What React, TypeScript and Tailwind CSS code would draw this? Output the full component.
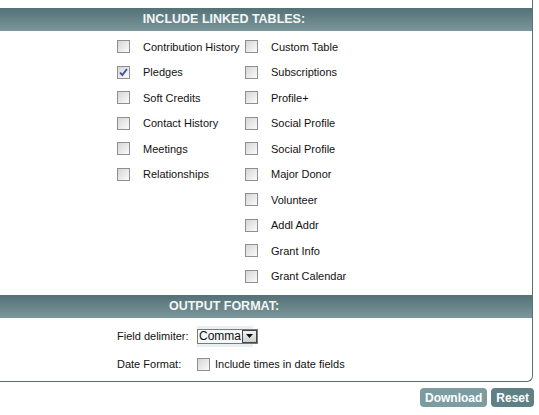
import React from 'react';

const leftCol = [
  { name: 'Contribution History', checked: false },
  { name: 'Pledges', checked: true },
  { name: 'Soft Credits', checked: false },
  { name: 'Contact History', checked: false },
  { name: 'Meetings', checked: false },
  { name: 'Relationships', checked: false },
];

const rightCol = [
  'Custom Table',
  'Subscriptions',
  'Profile+',
  'Social Profile',
  'Social Profile',
  'Major Donor',
  'Volunteer',
  'Addl Addr',
  'Grant Info',
  'Grant Calendar',
];

function Box({ checked = false }: { checked?: boolean }) {
  return (
    <span className="relative inline-block h-[13px] w-[13px] shrink-0 border border-[#8f8f8f] bg-gradient-to-br from-[#d6d6d6] to-[#fbfbfb]">
      {checked && (
        <svg viewBox="0 0 11 11" className="absolute left-0 top-0 h-[11px] w-[11px]">
          <path d="M2 5.5 L4.3 8 L9 2" fill="none" stroke="#3b4f9e" strokeWidth="1.8" />
        </svg>
      )}
    </span>
  );
}

function Header({ title }: { title: string }) {
  return (
    <div className="flex h-[23px] items-center justify-center bg-gradient-to-b from-[#537176] to-[#7d979b] pr-[84px] text-[12.5px] font-bold text-[#f3f6f6] [font-family:'Liberation_Sans',Arial,sans-serif]">
      {title}
    </div>
  );
}

function Item({ name, checked = false }: { name: string; checked?: boolean }) {
  return (
    <div className="flex h-[25.5px] items-center gap-[13px]">
      <Box checked={checked} />
      <span>{name}</span>
    </div>
  );
}

export default function App() {
  return (
    <div className="h-[415px] w-[539px] bg-white text-[11px] text-[#111] [font-family:Tahoma,'Liberation_Sans',Arial,sans-serif]">
      <div className="w-[533px] rounded-br-[6px] border-b border-r border-[#5b7075] pt-[8px]">
        <Header title="INCLUDE LINKED TABLES:" />
        <div className="flex pb-[6px] pl-[117px] pt-[3px]">
          <div className="w-[128px]">
            {leftCol.map((c) => (
              <Item key={c.name} name={c.name} checked={c.checked} />
            ))}
          </div>
          <div>
            {rightCol.map((n, i) => (
              <Item key={i} name={n} />
            ))}
          </div>
        </div>
        <Header title="OUTPUT FORMAT:" />
        <div className="pb-[6px] pl-[117px] pt-[7px]">
          <div className="flex h-[22px] items-center">
            <span className="w-[80px]">Field delimiter:</span>
            <div className="flex h-[21px] w-[56px] items-start bg-[#e9f0f1] pt-[3px]">
              <div className="flex h-[15px] items-center border border-[#7a7a7a] bg-[#f4f8f8] pl-[1px] text-[12px] leading-none">
                <span>Comma</span>
                <span className="ml-[1px] flex h-[13px] w-[15px] items-center justify-center border border-[#444] bg-gradient-to-b from-[#f2f2f2] to-[#cfcfcf]">
                  <svg viewBox="0 0 7 4" className="h-[4px] w-[7px]">
                    <path d="M0 0 H7 L3.5 4 Z" fill="#111" />
                  </svg>
                </span>
              </div>
            </div>
          </div>
          <div className="mt-[6px] flex h-[22px] items-center">
            <span className="w-[80px]">Date Format:</span>
            <Box />
            <span className="ml-[5px]">Include times in date fields</span>
          </div>
        </div>
      </div>
      <div className="flex w-[534px] justify-end gap-[4px] pt-[6px]">
        <button className="h-[19px] rounded-[4px] bg-[#7b9ca1] px-[5px] text-[12px] font-bold text-white">
          Download
        </button>
        <button className="h-[19px] rounded-[4px] bg-[#5f8085] px-[5px] text-[12px] font-bold text-white">
          Reset
        </button>
      </div>
    </div>
  );
}
